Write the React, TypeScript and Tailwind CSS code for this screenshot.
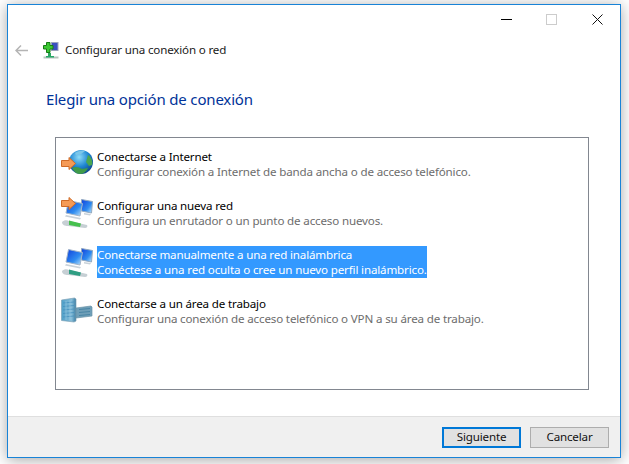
const font = { fontFamily: '"Noto Sans", "Open Sans", sans-serif' };

function OrangeArrow({ y }: { y: number }) {
  return (
    <path
      transform={`translate(1 ${y})`}
      d="M0.500 3.500h7.500V0.500l6.500 6-6.500 6V9.500H0.500z"
      fill="#f59a56"
      stroke="#cf6a26"
      strokeWidth="1"
    />
  );
}

function GlobeIcon() {
  return (
    <svg width="33" height="35" viewBox="0 0 33 35" className="shrink-0">
      <defs>
        <radialGradient id="globe" cx="0.42" cy="0.3" r="0.8">
          <stop offset="0" stopColor="#8fdcf8" />
          <stop offset="0.5" stopColor="#1f86d2" />
          <stop offset="1" stopColor="#0a3478" />
        </radialGradient>
      </defs>
      <circle cx="21" cy="15" r="12" fill="url(#globe)" />
      <path d="M12 21c3-2 7-1 10 1l6-1c-2 4-5 6-8 6-4 0-6-3-8-6z" fill="#3f9a4a" />
      <path d="M28 8c3 2 5 6 4 10l-3 1-3-4z" fill="#4ba64f" />
      <path d="M15 6c3-2 7-3 10-2l-4 3-5 1z" fill="#7cc6e8" />
      <OrangeArrow y={10} />
    </svg>
  );
}

function Monitors({ arrow, cable, id }: { arrow?: boolean; cable: string; id: string }) {
  return (
    <svg width="33" height="35" viewBox="0 0 33 35" className="shrink-0">
      <defs>
        <linearGradient id={id} x1="0" y1="0" x2="1" y2="1">
          <stop offset="0" stopColor="#0f3fdc" />
          <stop offset="0.6" stopColor="#2f8cf0" />
          <stop offset="1" stopColor="#c5e8fb" />
        </linearGradient>
      </defs>
      <path d="M21.500 3.500l11 2-1 11.500-10-2z" fill={`url(#${id})`} stroke="#93a9bf" strokeWidth="1" />
      <path d="M8.500 4.500l14 3-2.500 12.500-14-3z" fill={`url(#${id})`} stroke="#a3b5c9" strokeWidth="1" />
      <path d="M6 19l15 3-1 1.500-15-3z" fill="#c9d2da" />
      <path d="M24 17l7 1-1 1.500-6-1z" fill="#c9d2da" />
      <path d="M2 26c2-2 5-2 7-1l18 4c1 1 0 3-2 3l-17-2c-3 0-6-1-6-4z" fill="#c6cfd4" />
      <path d="M9 24.500l12 3-1 3.500-11-2z" fill={cable} />
      {arrow && <OrangeArrow y={1} />}
    </svg>
  );
}

function BuildingIcon() {
  return (
    <svg width="33" height="35" viewBox="0 0 33 35" className="shrink-0">
      <defs>
        <linearGradient id="bld" x1="0" y1="0" x2="1" y2="0">
          <stop offset="0" stopColor="#4f9fc8" />
          <stop offset="0.7" stopColor="#86bdd8" />
          <stop offset="1" stopColor="#3a7ca3" />
        </linearGradient>
      </defs>
      <path d="M1.500 6l13-2 1.500 1v22l-2 1-12.500-1.500z" fill="url(#bld)" stroke="#7fa3b8" strokeWidth="0.7" />
      <path d="M3 9l11-1M3 12.500l11-1M3 16l11-1M3 19.500l11-1M3 23l11-1" stroke="#3f8dbb" strokeWidth="0.7" />
      <path d="M6 7v19M10 6.500v20" stroke="#a8d3e8" strokeWidth="0.5" />
      <path d="M16 14l15-2 1 1v9l-16 2z" fill="#6f9fb8" stroke="#6b93a8" strokeWidth="0.7" />
      <path d="M19 15.500l11-1M19 18.500l11-1M19 21.500l11-1" stroke="#3f7d9f" strokeWidth="0.8" />
    </svg>
  );
}

function NetworkSetupIcon() {
  return (
    <svg width="16" height="17" viewBox="0 0 16 17" className="shrink-0">
      <rect x="8.500" y="0.500" width="6.500" height="8" fill="#3a4fc0" stroke="#9aa3bd" />
      <path d="M3.500 0.500h3.500v3h3v3.500H7v3.500H3.500V7H0.500V3.500h3z" fill="#3cc832" stroke="#167a14" />
      <path d="M5 11h3v3H5z" fill="#2aa860" />
      <path d="M0.500 14.500h15v2h-15z" fill="#b6c4bd" />
      <path d="M3 14h8v1.500H3z" fill="#28a868" />
    </svg>
  );
}

const options = [
  { title: 'Conectarse a Internet', desc: 'Configurar conexión a Internet de banda ancha o de acceso telefónico.', icon: <GlobeIcon /> },
  { title: 'Configurar una nueva red', desc: 'Configura un enrutador o un punto de acceso nuevos.', icon: <Monitors arrow cable="#46c04e" id="scr1" /> },
  { title: 'Conectarse manualmente a una red inalámbrica', desc: 'Conéctese a una red oculta o cree un nuevo perfil inalámbrico.', icon: <Monitors cable="#2f9e83" id="scr2" />, selected: true },
  { title: 'Conectarse a un área de trabajo', desc: 'Configurar una conexión de acceso telefónico o VPN a su área de trabajo.', icon: <BuildingIcon /> },
];

export default function App() {
  return (
    <div className="w-[629px] h-[464px] bg-white overflow-hidden pt-[4px] pl-[7px]" style={font}>
      <div className="w-[614px] h-[454px] flex flex-col bg-white border border-[#1883d7] shadow-[0_2px_14px_rgba(0,0,0,0.35)]">
        {/* title bar */}
        <div className="h-[29px] flex items-center shrink-0 text-black">
          <div className="ml-[493px] w-[11px] h-[1px] bg-black mt-[-1px]" />
          <div className="ml-[34px] w-[11px] h-[11px] border border-[#cccccc]" />
          <svg width="11" height="11" viewBox="0 0 11 11" className="ml-[35px]">
            <path d="M0.500 0.500l10 10M10.500 0.500l-10 10" stroke="#111" strokeWidth="1" />
          </svg>
        </div>

        {/* nav */}
        <div className="h-[32px] flex items-center shrink-0 pl-[7px]">
          <svg width="13" height="11" viewBox="0 0 13 11">
            <path d="M6 0.500L1 5.500l5 5M1 5.500h12" fill="none" stroke="#b4b4b4" strokeWidth="1.500" />
          </svg>
          <div className="ml-[15px]"><NetworkSetupIcon /></div>
          <span className="ml-[6px] text-[11.6px] leading-[16px] text-[#1a1a1a] tracking-[-0.17px]">Configurar una conexión o red</span>
        </div>

        {/* content */}
        <div className="flex-1 flex flex-col pl-[38px]">
          <h1 className="mt-[22px] text-[15px] leading-[22px] font-normal text-[#003399] tracking-[-0.17px]">Elegir una opción de conexión</h1>
          <div className="mt-[27px] ml-[9px] w-[534px] h-[253px] border border-[#828790] flex flex-col pt-[1px] pl-[4px]">
            {options.map((o) => (
              <div key={o.title} className="h-[49px] flex items-center shrink-0">
                <div className="w-[37px] shrink-0 pt-[2px]">{o.icon}</div>
                <div className={`text-[11.6px] leading-[15px] py-[1px] tracking-[-0.16px] ${o.selected ? 'bg-[#3399ff] text-white' : ''}`}>
                  <div className={o.selected ? '' : 'text-black'}>{o.title}</div>
                  <div className={o.selected ? '' : 'text-[#6d6d6d]'}>{o.desc}</div>
                </div>
              </div>
            ))}
          </div>
        </div>

        {/* footer */}
        <div className="h-[41px] shrink-0 bg-[#f0f0f0] border-t border-[#dfdfdf] flex items-center justify-end gap-[9px] pr-[11px]">
          <button className="w-[79px] h-[21px] bg-[#e1e1e1] border-2 border-[#0078d7] text-[11.6px] leading-none text-[#111] tracking-[-0.17px]">Siguiente</button>
          <button className="w-[79px] h-[21px] bg-[#e1e1e1] border border-[#adadad] text-[11.6px] leading-none text-[#111] tracking-[-0.17px]">Cancelar</button>
        </div>
      </div>
    </div>
  );
}
